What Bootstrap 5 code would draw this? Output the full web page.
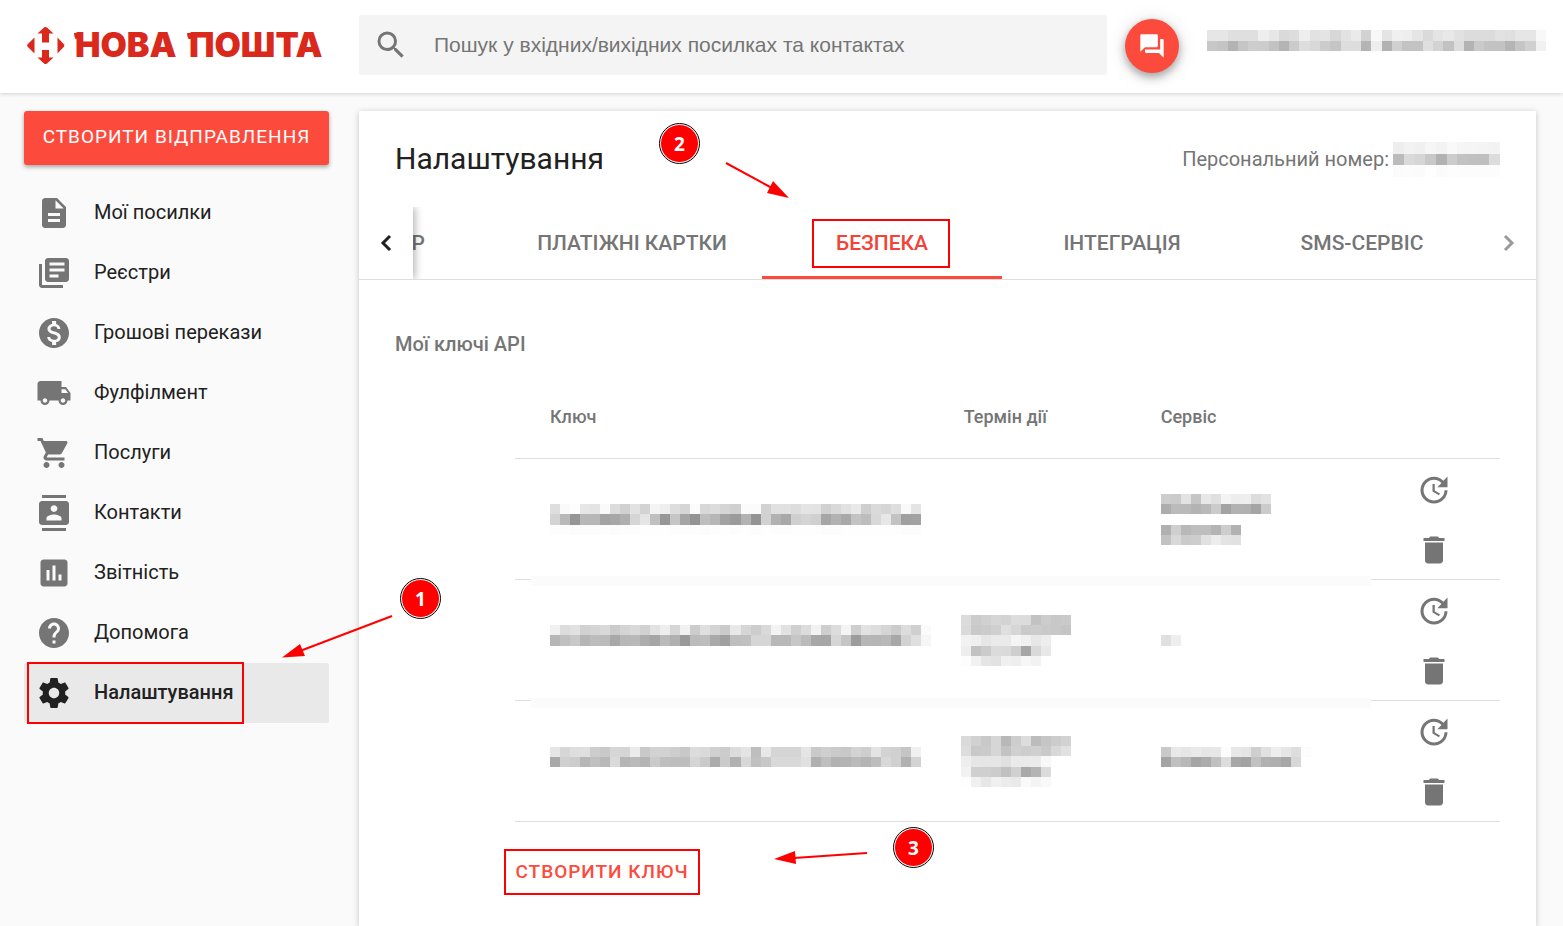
<!DOCTYPE html>
<html lang="uk">
<head>
<meta charset="utf-8">
<meta name="viewport" content="width=device-width, initial-scale=1">
<title>Нова Пошта — Налаштування</title>
<link href="https://cdn.jsdelivr.net/npm/bootstrap@5.3.0/dist/css/bootstrap.min.css" rel="stylesheet">
<style>
  :root { --np-red: #fc4b3c; --np-grey: #757575; --np-ink: #212121; --np-mark: #ff0000; }
  body { font-family: Roboto, "Liberation Sans", sans-serif; background: #fafafa; color: var(--np-ink); font-size: 20px; line-height: 30px; }
  svg { display: block; flex: none; }
  .icon { width: 36px; height: 36px; fill: currentColor; }
  .np-header { height: 93px; background: #fff; box-shadow: 0 1px 4px rgba(0,0,0,.16); padding: 0 17px 3px 27px; z-index: 1; }
  .np-brand { width: 332px; }
  .np-brand svg { overflow: visible; }
  .np-brand text { font-family: Inter, Lato, sans-serif; font-weight: 900; font-size: 34px; fill: #da291c; }
  .np-search { height: 60px; background: #f4f4f4; border-radius: 3px; padding-left: 14px; color: var(--np-grey); }
  .np-search input { font-family: "Liberation Sans", Arial, sans-serif; font-size: 21px; color: #757575; padding: 0 0 0 25px; }
  .np-search input::placeholder { color: #757575; opacity: 1; }
  .np-fab { width: 54px; height: 54px; background: var(--np-red); color: #fff; margin: 2px 28px 0 18px; box-shadow: 0 4px 8px rgba(0,0,0,.32), 0 2px 20px rgba(0,0,0,.12); }
  .np-fab .icon { width: 28px; height: 28px; }
  .np-fab:hover, .np-create:hover { background: #e64436; color: #fff; }
  .np-user { margin-bottom: 10px; }
  .np-body { padding: 18px 27px 0 24px; gap: 30px; }
  .np-side { width: 305px; flex: none; z-index: 2; }
  .np-create { height: 54px; background: var(--np-red); color: #fff; border-radius: 3px; font-size: 19px; letter-spacing: 1px; padding: 0 0 1px; box-shadow: 0 2px 4px rgba(0,0,0,.35); }
  .np-menu { margin-top: 18px; }
  .np-menu .nav-link { height: 60px; padding: 0 12px; gap: 22px; color: var(--np-ink); border-radius: 3px; font-size: 20px; }
  .np-menu .nav-link span { padding-bottom: 2px; }
  .np-menu .nav-link .icon { color: var(--np-grey); }
  .np-menu .nav-link.active { background: #e9e9e9; font-weight: 500; }
  .np-menu .nav-link.active .icon { color: var(--np-ink); }
  .np-panel { background: #fff; box-shadow: 0 1px 6px rgba(0,0,0,.22); min-width: 0; }
  .np-top { height: 96px; padding: 0 36px; }
  .np-top h1 { font-size: 30px; line-height: 36px; font-weight: 400; }
  .np-number { color: var(--np-grey); font-size: 20px; gap: 4px; }
  .np-tabs { height: 73px; border-bottom: 1px solid #dedede; }
  .np-tabs .step { width: 54px; flex: none; border: 0; background: #fff; z-index: 1; }
  .np-tabs .step-back { box-shadow: 2px 0 8px rgba(0,0,0,.3); clip-path: inset(0 -16px 0 0); }
  .np-tabs .nav { min-width: 0; overflow: hidden; }
  .np-tabs .nav-link { width: 240px; flex: none; height: 72px; padding: 0; color: var(--np-grey); font-size: 21px; font-weight: 500; border-bottom: 3px solid transparent; border-top: 3px solid transparent; border-radius: 0; }
  .np-tabs .nav-link.wide { width: 260px; }
  .np-tabs .nav-link.cut { width: 90px; padding-right: 77px; }
  .np-tabs .nav-link.active { color: #f44336; border-bottom-color: var(--np-red); }
  .np-sub { font-size: 20px; line-height: 30px; font-weight: 500; color: var(--np-grey); margin: 49px 36px 0; }
  .np-keys { margin: 17px 36px 0 156px; }
  .np-keys table { table-layout: fixed; margin: 0; --bs-table-bg: transparent; }
  .np-keys th { height: 82px; font-size: 18px; font-weight: 500; color: var(--np-grey); padding: 0 0 0 35px; vertical-align: middle; border-bottom: 1px solid #dedede; }
  .np-keys td { height: 121px; padding: 2px 0 0 35px; vertical-align: middle; border-bottom: 1px solid #dedede; }
  .np-keys td.term { padding-left: 32px; }
  .np-keys td.acts { padding: 0 0 0 6px; }
  .c-key { width: 42%; } .c-term { width: 20%; } .c-serv { width: 24%; }
  .act { width: 60px; height: 60px; border: 0; background: none; color: var(--np-grey); padding: 2px 0 0; }
  .cover { height: 10px; left: 16px; right: 129px; background: #fbfbfb; }
  .cover-1 { top: 200px; } .cover-2 { top: 322px; }
  .np-add { margin: 27px 0 30px 145px; width: 196px; }
  .np-add button { width: 196px; height: 46px; padding: 2px 0 0; border: 2px solid var(--np-mark); border-radius: 0; color: var(--np-red); font-size: 19px; font-weight: 500; letter-spacing: 1px; }
  .frame { border: 2px solid var(--np-mark); pointer-events: none; }
  .frame-menu { left: 3px; top: -1px; width: 217px; height: 62px; }
  .frame-tab { left: 50px; top: 9px; width: 138px; height: 49px; }
  .pin { width: 39px; height: 39px; border: 1px solid #fff; outline: 1px solid #000; background: var(--np-mark); color: #fff; font: 700 19px/38px "Open Sans", "Noto Sans", sans-serif; text-align: center; z-index: 3; }
  .arrow { fill: var(--np-mark); stroke: var(--np-mark); z-index: 3; pointer-events: none; }
  .pin-1 { left: 377px; top: -84px; } .arrow-1 { left: 256px; top: -50px; }
  .pin-2 { right: 837px; top: 13px; } .arrow-2 { right: 746px; top: 49px; }
  .pin-3 { left: 390px; top: -21px; } .arrow-3 { left: 270px; top: -1px; }
</style>
</head>
<body>
<div class="d-flex flex-column min-vh-100">
  <header class="np-header d-flex align-items-center position-relative">
    <a class="np-brand flex-shrink-0" href="#" aria-label="Нова Пошта">
      <svg width="310" height="48" viewBox="0 0 310 48">
        <g fill="#da291c">
          <path d="M10.500 12.500 17 6.600Q18.500 5.600 20 6.600L26.500 12.500H22V21.500H15V12.500Z"/>
          <path d="M10.500 36.500H15V29H22V36.500H26.500L20 42.500Q18.500 43.500 17 42.500Z"/>
          <path d="M7.500 16.500V32.500L.6 25.800Q-.2 24.500 .6 23.200Z"/>
          <path d="M30.500 16.500V32.500L36.900 25.800Q37.700 24.500 36.900 23.200Z"/>
          <path d="M47 12h6v6h-4.500Q47 15.500 47 12ZM160 12h7v6h-5.500Q160 15.500 160 12Z"/>
        </g>
        <text x="48" y="36">НОВА</text>
        <text x="162" y="36">ПОШТА</text>
      </svg>
    </a>
    <label class="np-search d-flex align-items-center flex-grow-1">
      <svg class="icon" viewBox="0 0 24 24"><path d="M15.500 14h-.79l-.28-.27A6.471 6.471 0 0 0 16 9.500 6.500 6.500 0 1 0 9.500 16c1.610 0 3.090-.59 4.230-1.570l.27.28v.79l5 4.990L20.490 19l-4.990-5zm-6 0C7.010 14 5 11.990 5 9.500S7.010 5 9.500 5 14 7.010 14 9.500 11.990 14 9.500 14z"/></svg>
      <input class="form-control border-0 bg-transparent shadow-none" type="text" placeholder="Пошук у вхідних/вихідних посилках та контактах" aria-label="Пошук">
    </label>
    <button class="np-fab btn rounded-circle border-0 p-0 d-flex align-items-center justify-content-center flex-shrink-0" type="button" aria-label="Чат">
      <svg class="icon" viewBox="0 0 24 24"><path d="M21 6h-2v9H6v2c0 .55.45 1 1 1h11l4 4V7c0-.55-.45-1-1-1zm-4 6V3c0-.55-.45-1-1-1H3c-.55 0-1 .45-1 1v14l4-4h10c.55 0 1-.45 1-1z"/></svg>
    </button>
    <svg class="mosaic np-user" width="339" height="21" data-rows="e6 e6 df df df ee e7 da dd ee e2 e4 d7 e2 ea d2 f8 e4 f0 ee e5 da e4 e8 e1 dc dc dc e2 df e6 e6 f8/c7 c4 b3 c5 cd cc c2 b4 cb dd d8 cc c5 dd dd b4 ee b2 d0 c3 c3 df d3 c2 dd b3 ca c3 c3 b5 c5 d0 f1"></svg>
  </header>

  <div class="np-body d-flex flex-grow-1">
    <aside class="np-side position-relative">
      <button class="np-create btn border-0 w-100" type="button">СТВОРИТИ ВІДПРАВЛЕННЯ</button>
      <nav class="np-menu nav flex-column">
        <a class="nav-link d-flex align-items-center" href="#"><svg class="icon" viewBox="0 0 24 24"><path d="M14 2H6c-1.100 0-1.990.9-1.990 2L4 20c0 1.100.89 2 1.990 2H18c1.100 0 2-.9 2-2V8l-6-6zm2 16H8v-2h8v2zm0-4H8v-2h8v2zm-3-5V3.500L18.500 9H13z"/></svg><span>Мої посилки</span></a>
        <a class="nav-link d-flex align-items-center" href="#"><svg class="icon" viewBox="0 0 24 24"><path d="M4 6H2v14c0 1.100.9 2 2 2h14v-2H4V6zm16-4H8c-1.100 0-2 .9-2 2v12c0 1.100.9 2 2 2h12c1.100 0 2-.9 2-2V4c0-1.100-.9-2-2-2zm-1 9H9V9h10v2zm-4 4H9v-2h6v2zm4-8H9V5h10v2z"/></svg><span>Реєстри</span></a>
        <a class="nav-link d-flex align-items-center" href="#"><svg class="icon" viewBox="0 0 24 24"><path d="M12 2C6.480 2 2 6.480 2 12s4.480 10 10 10 10-4.480 10-10S17.520 2 12 2zm1.410 16.090V20h-2.670v-1.930c-1.710-.36-3.160-1.460-3.270-3.400h1.960c.1 1.050.82 1.870 2.650 1.870 1.960 0 2.400-.98 2.400-1.590 0-.83-.44-1.610-2.670-2.140-2.480-.6-4.180-1.620-4.180-3.670 0-1.720 1.390-2.840 3.110-3.210V4h2.670v1.950c1.860.45 2.790 1.860 2.850 3.390H14.300c-.05-1.110-.64-1.870-2.220-1.870-1.500 0-2.400.68-2.400 1.640 0 .84.65 1.390 2.670 1.910s4.180 1.390 4.180 3.910c-.01 1.830-1.380 2.830-3.120 3.160z"/></svg><span>Грошові перекази</span></a>
        <a class="nav-link d-flex align-items-center" href="#"><svg class="icon" viewBox="0 0 24 24"><path d="M20 8h-3V4H3c-1.100 0-2 .9-2 2v11h2c0 1.660 1.340 3 3 3s3-1.340 3-3h6c0 1.660 1.340 3 3 3s3-1.340 3-3h2v-5l-3-4zM6 18.500c-.83 0-1.500-.67-1.500-1.500s.67-1.500 1.500-1.500 1.500.67 1.500 1.500-.67 1.500-1.500 1.500zm13.500-9l1.960 2.500H17V9.500h2.500zm-1.500 9c-.83 0-1.500-.67-1.500-1.500s.67-1.500 1.500-1.500 1.500.67 1.500 1.500-.67 1.500-1.500 1.500z"/></svg><span>Фулфілмент</span></a>
        <a class="nav-link d-flex align-items-center" href="#"><svg class="icon" viewBox="0 0 24 24"><path d="M7 18c-1.100 0-1.990.9-1.990 2S5.900 22 7 22s2-.9 2-2-.9-2-2-2zM1 2v2h2l3.600 7.590-1.350 2.450c-.16.28-.25.61-.25.96 0 1.100.9 2 2 2h12v-2H7.420c-.14 0-.25-.11-.25-.25l.03-.12.9-1.630h7.450c.75 0 1.410-.41 1.750-1.030l3.580-6.490c.08-.14.12-.31.12-.48 0-.55-.45-1-1-1H5.210l-.94-2H1zm16 16c-1.100 0-1.990.9-1.990 2s.89 2 1.990 2 2-.9 2-2-.9-2-2-2z"/></svg><span>Послуги</span></a>
        <a class="nav-link d-flex align-items-center" href="#"><svg class="icon" viewBox="0 0 24 24"><path d="M20 0H4v2h16V0zM4 24h16v-2H4v2zM20 4H4c-1.100 0-2 .9-2 2v12c0 1.100.9 2 2 2h16c1.100 0 2-.9 2-2V6c0-1.100-.9-2-2-2zm-8 2.750c1.240 0 2.250 1.010 2.250 2.250s-1.010 2.250-2.250 2.250S9.750 10.240 9.750 9 10.760 6.750 12 6.750zM17 17H7v-1.500c0-1.670 3.330-2.500 5-2.500s5 .83 5 2.500V17z"/></svg><span>Контакти</span></a>
        <a class="nav-link d-flex align-items-center" href="#"><svg class="icon" viewBox="0 0 24 24"><path d="M19 3H5c-1.100 0-2 .9-2 2v14c0 1.100.9 2 2 2h14c1.100 0 2-.9 2-2V5c0-1.100-.9-2-2-2zM9 17H7v-7h2v7zm4 0h-2V7h2v10zm4 0h-2v-4h2v4z"/></svg><span>Звітність</span></a>
        <a class="nav-link d-flex align-items-center" href="#"><svg class="icon" viewBox="0 0 24 24"><path d="M12 2C6.480 2 2 6.480 2 12s4.480 10 10 10 10-4.480 10-10S17.520 2 12 2zm1 17h-2v-2h2v2zm2.070-7.750l-.9.92C13.450 12.900 13 13.500 13 15h-2v-.5c0-1.100.45-2.100 1.170-2.830l1.240-1.260c.37-.36.59-.86.59-1.410 0-1.100-.9-2-2-2s-2 .9-2 2H8c0-2.210 1.790-4 4-4s4 1.790 4 4c0 .88-.36 1.680-.93 2.250z"/></svg><span>Допомога</span></a>
        <div class="position-relative">
          <a class="nav-link active d-flex align-items-center" href="#" aria-current="page"><svg class="icon" viewBox="0 0 24 24"><path d="M19.430 12.980c.04-.32.07-.64.07-.98s-.03-.66-.07-.98l2.110-1.650c.19-.15.24-.42.12-.64l-2-3.460c-.12-.22-.39-.3-.61-.22l-2.490 1c-.52-.4-1.080-.73-1.690-.98l-.38-2.650C14.460 2.180 14.250 2 14 2h-4c-.25 0-.46.18-.49.42l-.38 2.650c-.61.25-1.170.59-1.690.98l-2.490-1c-.23-.09-.49 0-.61.22l-2 3.460c-.13.22-.07.49.12.64l2.110 1.650c-.04.32-.07.65-.07.98s.03.66.07.98l-2.110 1.650c-.19.15-.24.42-.12.64l2 3.460c.12.22.39.3.61.22l2.490-1c.52.4 1.080.73 1.690.98l.38 2.650c.03.24.24.42.49.42h4c.25 0 .46-.18.49-.42l.38-2.650c.61-.25 1.170-.59 1.690-.98l2.490 1c.23.09.49 0 .61-.22l2-3.460c.12-.22.07-.49-.12-.64l-2.110-1.650zM12 15.500c-1.930 0-3.500-1.570-3.500-3.500s1.570-3.500 3.500-3.500 3.500 1.570 3.500 3.500-1.570 3.500-3.500 3.500z"/></svg><span>Налаштування</span></a>
          <span class="frame frame-menu position-absolute"></span>
          <svg class="arrow arrow-1 position-absolute" width="114" height="48" viewBox="0 0 114 48"><path d="M112 3 20 38" stroke-width="2"/><path d="M2 44.500 20 31 25 43Z" stroke="none"/></svg>
          <span class="pin pin-1 position-absolute rounded-circle">1</span>
        </div>
      </nav>
    </aside>

    <main class="np-panel position-relative flex-grow-1">
      <div class="np-top d-flex align-items-center justify-content-between">
        <h1 class="m-0">Налаштування</h1>
        <div class="np-number d-flex align-items-center">Персональний номер:
          <svg class="mosaic" width="107" height="35" data-rows="ee f2 f0 f6 f3 f9 f5 f5 f4 f3/bb da d6 c8 b2 cc c2 c0 bf dc/fb fc fb fe fb fd fc fc fc fc"></svg>
        </div>
      </div>
      <div class="np-tabs d-flex">
        <button class="step step-back p-0 d-flex align-items-center justify-content-center position-relative" type="button" aria-label="Назад"><svg width="14" height="20" viewBox="0 0 14 20" fill="none" stroke="#212121" stroke-width="3"><path d="M11 3 4 10l7 7"/></svg></button>
        <div class="nav flex-nowrap flex-grow-1 justify-content-end">
          <a class="nav-link cut d-flex align-items-center justify-content-end" href="#">Р</a>
          <a class="nav-link wide d-flex align-items-center justify-content-center" href="#">ПЛАТІЖНІ КАРТКИ</a>
          <a class="nav-link active position-relative d-flex align-items-center justify-content-center" href="#">БЕЗПЕКА<span class="frame frame-tab position-absolute"></span></a>
          <a class="nav-link d-flex align-items-center justify-content-center" href="#">ІНТЕГРАЦІЯ</a>
          <a class="nav-link d-flex align-items-center justify-content-center" href="#">SMS-СЕРВІС</a>
        </div>
        <button class="step p-0 d-flex align-items-center justify-content-center" type="button" aria-label="Вперед"><svg width="14" height="20" viewBox="0 0 14 20" fill="none" stroke="#9a9a9a" stroke-width="3"><path d="m3 3 7 7-7 7"/></svg></button>
      </div>
      <span class="pin pin-2 position-absolute rounded-circle">2</span>
      <svg class="arrow arrow-2 position-absolute" width="66" height="40" viewBox="0 0 66 40"><path d="M2 3 48 28" stroke-width="2"/><path d="M65 38 49 21 43 33Z" stroke="none"/></svg>

      <h2 class="np-sub">Мої ключі API</h2>
      <div class="np-keys position-relative">
        <table class="table w-100">
          <colgroup><col class="c-key"><col class="c-term"><col class="c-serv"><col></colgroup>
          <thead><tr><th scope="col">Ключ</th><th scope="col">Термін дії</th><th scope="col">Сервіс</th><th></th></tr></thead>
          <tbody>
            <tr>
              <td><svg class="mosaic" width="371" height="31" data-rows="de fa fd e6 e4 fa dc d0 e2 d3 f4 ee dd d5 fb d8 dc d5 d0 fb fb d2 e1 e1 dd e4 e3 d1 d9 e1 e9 ce da d6 de f9 e4/d3 b9 96 b7 b7 a3 a7 af d6 e5 c0 97 c6 a5 94 be b6 a2 9b b3 94 d1 b2 a8 cf d4 d0 a6 b2 a9 c3 bd d8 e7 c3 a0 a2/fd fd fc fc fc fd fc fd fd fe fe fe fd fd fd fc fd fe fd fe fc fe fd fd fe fe fe fc fc fe fe fe fe fe fe fc fc"></svg></td>
              <td class="term"></td>
              <td><svg class="mosaic" width="110" height="51" data-rows="cd cb e3 c5 e7 df f4 ed ee dc e2/ad bb ba b3 b9 cb a3 b2 b1 a5 cb/- - - - - - - - - - -/b0 cf b8 be be b4 cd b2 - - -/c2 d8 cb cd e1 ed e3 e1 - - -"></svg></td>
              <td class="acts"></td>
            </tr>
            <tr>
              <td><svg class="mosaic" width="381" height="31" data-rows="f1 dc e1 d1 d5 d9 cb d4 d9 d1 e2 ee d6 f1 cc df d4 cb e8 d6 cd d9 f3 e2 d0 dc f2 ce dc f4 ce e2 dd d5 cc dc d0 fb/b6 c0 c8 b5 bc bb a8 b7 b9 ac a5 ba b0 99 bb bd a9 a0 be c0 d6 d6 b8 b8 c6 bb a7 a6 d6 c5 9c b6 b5 b8 a7 d2 df f6/- - - - - - - - - - - - - - - - - - - - - - - - - - - - - - - - - - - - - -"></svg></td>
              <td class="term"><svg class="mosaic" width="110" height="51" data-rows="dc cc d0 d6 d3 dd dc c2 cc c8 ca/da c9 cb cf df d6 ca cc c9 c8 c5/f2 ef e6 ea ea f5 f0 e7 ed - -/ee c2 cb db da ce a6 d9 e8 - -/fd f1 e5 e2 f0 ee f6 f2 - - -"></svg></td>
              <td><svg class="mosaic" width="20" height="11" data-rows="e0 ee"></svg></td>
              <td class="acts"></td>
            </tr>
            <tr>
              <td><svg class="mosaic" width="371" height="30" data-rows="e6 d6 de df cd c9 d6 d5 eb c9 d2 d2 ce c8 dc da d0 cc dc e4 be e7 d5 d5 d5 e5 c9 cf ca c8 d3 ce e4 d3 d0 c5 f0/a9 d0 cc b6 c0 b8 da b5 ba b4 ca bf be be d5 ca ab cb b1 d8 c0 c8 d9 d9 d9 e0 b0 bf b2 b3 ba b4 be d8 d0 b1 d3/- - - - - - - - - - - - - - - - - - - - - - - - - - - - - - - - - - - - -"></svg></td>
              <td class="term"><svg class="mosaic" width="110" height="51" data-rows="da d1 c9 d6 b8 cd dc bc c5 cc d2/dd c9 cb d6 c3 d0 cd d0 c9 d8 e1/ee e6 e5 e5 e0 ea ea ea f8 - -/f2 cf cf cc c1 d0 a9 b4 db - -/fe f0 e7 f0 ec e9 fa f4 f9 - -"></svg></td>
              <td><svg class="mosaic" width="150" height="30" data-rows="c9 e9 e5 ea e6 e7 fc e8 e5 cf e0 ee e6 dd fc/a4 c0 b8 a5 ac c0 dd a7 a3 c1 b1 af a7 d7 -/- - - - - - - - - - - - - - -"></svg></td>
              <td class="acts"></td>
            </tr>
          </tbody>
        </table>
        <span class="cover cover-1 position-absolute"></span>
        <span class="cover cover-2 position-absolute"></span>
      </div>
      <div class="np-add position-relative">
        <button class="btn" type="button">СТВОРИТИ КЛЮЧ</button>
        <svg class="arrow arrow-3 position-absolute" width="96" height="20" viewBox="0 0 96 20"><path d="M93 5 20 10" stroke-width="2"/><path d="M0 11 21 3 22 16Z" stroke="none"/></svg>
        <span class="pin pin-3 position-absolute rounded-circle">3</span>
      </div>
    </main>
  </div>
</div>

<template id="row-actions">
  <div class="d-flex flex-column align-items-center">
    <button class="act d-flex align-items-center justify-content-center" type="button" aria-label="Оновити"><svg class="icon" viewBox="0 0 24 24"><path d="M21 10.120h-6.780l2.740-2.820c-2.730-2.700-7.150-2.800-9.880-.1-2.730 2.710-2.730 7.080 0 9.790 2.730 2.710 7.150 2.710 9.880 0C18.320 15.650 19 14.080 19 12.100h2c0 1.980-.88 4.550-2.640 6.290-3.510 3.480-9.210 3.480-12.720 0-3.500-3.470-3.530-9.110-.02-12.580 3.510-3.470 9.140-3.470 12.650 0L21 3v7.120zM12.500 8v4.250l3.500 2.080-.72 1.210L11 13V8h1.500z"/></svg></button>
    <button class="act d-flex align-items-center justify-content-center" type="button" aria-label="Видалити"><svg class="icon" viewBox="0 0 24 24"><path d="M6 19c0 1.100.9 2 2 2h8c1.100 0 2-.9 2-2V7H6v12zM19 4h-3.500l-1-1h-5l-1 1H5v2h14V4z"/></svg></button>
  </div>
</template>
<script src="https://cdn.jsdelivr.net/npm/bootstrap@5.3.0/dist/js/bootstrap.bundle.min.js"></script>
<script>
  // The same pair of action buttons closes every key row.
  const actions = document.getElementById('row-actions');
  document.querySelectorAll('.acts').forEach(td => td.append(actions.content.cloneNode(true)));

  // Private values are pixelated: each two-digit code is the grey level of one cell.
  document.querySelectorAll('.mosaic').forEach(svg => {
    const rows = svg.dataset.rows.split('/').map(r => r.split(' '));
    svg.setAttribute('viewBox', `0 0 ${rows[0].length} ${rows.length}`);
    svg.setAttribute('preserveAspectRatio', 'none');
    svg.setAttribute('shape-rendering', 'crispEdges');
    svg.setAttribute('aria-hidden', 'true');
    svg.innerHTML = rows.map((r, y) => r.map((c, x) => c === '-' ? '' :
      `<rect x="${x}" y="${y}" width="1" height="1" fill="#${c}${c}${c}"/>`).join('')).join('');
  });
</script>
</body>
</html>
